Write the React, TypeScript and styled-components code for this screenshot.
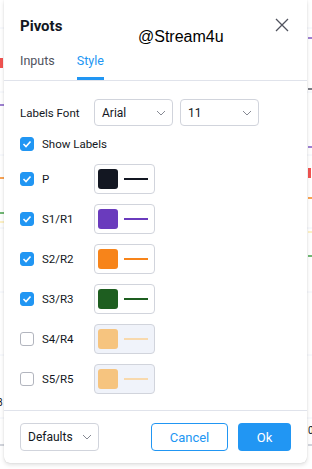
import styled, { createGlobalStyle } from "styled-components";

const GlobalStyle = createGlobalStyle`
  html, body {
    margin: 0;
    padding: 0;
    background: #ffffff;
  }
  body {
    font-family: Roboto, "Noto Sans", sans-serif;
    color: #131722;
  }
`;

const BLUE = "#2196f3";

type PivotRow = {
  label: string;
  checked: boolean;
  swatch: string;
  line: string;
};

const rows: PivotRow[] = [
  { label: "P", checked: true, swatch: "#131722", line: "#131722" },
  { label: "S1/R1", checked: true, swatch: "#6a3bbd", line: "#6a3bbd" },
  { label: "S2/R2", checked: true, swatch: "#f7841a", line: "#f7841a" },
  { label: "S3/R3", checked: true, swatch: "#1e5e20", line: "#1e5e20" },
  { label: "S4/R4", checked: false, swatch: "#f6c47f", line: "#f8d9ad" },
  { label: "S5/R5", checked: false, swatch: "#f6c47f", line: "#f8d9ad" },
];

function ChartBackdrop() {
  // bits of the chart that peek out around the dialog
  return (
    <Backdrop width="312" height="469" viewBox="0 0 312 469">
      {[28, 92, 155, 228, 292, 355, 418].map((y) => (
        <line key={y} x1="0" x2="312" y1={y} y2={y} stroke="#f0f3fa" strokeWidth="1" />
      ))}
      <rect x="0" y="58" width="3" height="10" fill="#f05350" />
      <line x1="0" x2="4" y1="105" y2="105" stroke="#7e57c2" strokeWidth="1.5" />
      <line x1="0" x2="4" y1="178" y2="178" stroke="#f7841a" strokeWidth="1.5" />
      <line x1="0" x2="4" y1="213" y2="213" stroke="#43a047" strokeWidth="1.5" />
      <line x1="0" x2="4" y1="222" y2="222" stroke="#fbe38a" strokeWidth="1" />
      <line x1="0" x2="4" y1="445" y2="445" stroke="#d1d4dc" strokeWidth="2" />
      <text x="-3" y="406" fontSize="10" fill="#131722" fontFamily="Roboto">8</text>
      <line x1="308" x2="312" y1="38" y2="38" stroke="#7e57c2" strokeWidth="1.5" />
      <line x1="308" x2="312" y1="89" y2="89" stroke="#50535e" strokeWidth="1.5" />
      <line x1="308" x2="312" y1="147" y2="147" stroke="#7e57c2" strokeWidth="1.5" />
      <rect x="308" y="168" width="3" height="10" fill="#f05350" />
      <line x1="308" x2="312" y1="198" y2="198" stroke="#f7841a" strokeWidth="1.5" />
      <line x1="308" x2="312" y1="232" y2="232" stroke="#fbe38a" strokeWidth="1" />
      <line x1="308" x2="312" y1="256" y2="256" stroke="#43a047" strokeWidth="1.5" />
      <line x1="308" x2="312" y1="445" y2="445" stroke="#d1d4dc" strokeWidth="2" />
      <text x="308" y="434" fontSize="10" fill="#131722" fontFamily="Roboto">0</text>
    </Backdrop>
  );
}

function Chevron() {
  return (
    <svg width="10" height="6" viewBox="0 0 10 6">
      <path d="M1 1l4 4 4-4" fill="none" stroke="#868993" strokeWidth="1" />
    </svg>
  );
}

function Check() {
  return (
    <svg width="10" height="8" viewBox="0 0 10 8">
      <path d="M1.5 4l2.5 2.5 4.5-5" fill="none" stroke="#fff" strokeWidth="1.6" />
    </svg>
  );
}

function App() {
  return (
    <Page>
      <GlobalStyle />
      <ChartBackdrop />
      <Dialog>
        <Header>
          <Title>Pivots</Title>
          <CloseButton aria-label="close">
            <svg width="14" height="14" viewBox="0 0 14 14">
              <path d="M1 1l12 12M13 1L1 13" stroke="#50535e" strokeWidth="1.3" />
            </svg>
          </CloseButton>
          <Watermark>@Stream4u</Watermark>
        </Header>

        <Tabs>
          <Tab>Inputs</Tab>
          <Tab $active>Style</Tab>
        </Tabs>

        <Content>
          <FontRow>
            <FieldLabel>Labels Font</FieldLabel>
            <Select $width={79}>
              Arial
              <Chevron />
            </Select>
            <Select $width={79}>
              11
              <Chevron />
            </Select>
          </FontRow>

          <CheckRow>
            <Box $checked>
              <Check />
            </Box>
            <CheckText>Show Labels</CheckText>
          </CheckRow>

          <ColorList>
            {rows.map((r) => (
              <ColorRow key={r.label}>
                <CheckRow>
                  <Box $checked={r.checked}>{r.checked && <Check />}</Box>
                  <CheckText>{r.label}</CheckText>
                </CheckRow>
                <ColorButton $disabled={!r.checked}>
                  <Swatch $color={r.swatch} />
                  <LineSample $color={r.line} />
                </ColorButton>
              </ColorRow>
            ))}
          </ColorList>
        </Content>

        <Footer>
          <Select as="button" $width={79} $height={28}>
            Defaults
            <Chevron />
          </Select>
          <Spacer />
          <OutlineButton>Cancel</OutlineButton>
          <PrimaryButton>Ok</PrimaryButton>
        </Footer>
      </Dialog>
    </Page>
  );
}

const Page = styled.div`
  position: relative;
  width: 312px;
  height: 469px;
  overflow: hidden;
  background: #ffffff;
`;

const Backdrop = styled.svg`
  position: absolute;
  inset: 0;
`;

const Dialog = styled.div`
  position: absolute;
  left: 4px;
  top: 0;
  width: 303px;
  height: 463px;
  background: #ffffff;
  border-radius: 0 0 6px 6px;
  box-shadow: 0 2px 4px rgba(0, 0, 0, 0.12), 0 0 1px rgba(0, 0, 0, 0.2);
  display: flex;
  flex-direction: column;
`;

const Header = styled.div`
  position: relative;
  height: 46px;
  display: flex;
  align-items: center;
  justify-content: space-between;
  padding: 0 16px;
  box-sizing: border-box;
`;

const Title = styled.div`
  font-size: 15px;
  font-weight: 700;
  margin-top: 5px;
`;

const CloseButton = styled.button`
  border: 0;
  background: none;
  padding: 0;
  margin-right: 2px;
  margin-top: 4px;
  display: flex;
  cursor: pointer;
`;

const Watermark = styled.div`
  position: absolute;
  left: 134px;
  top: 28px;
  font-family: "Liberation Sans", Arial, sans-serif;
  font-size: 16px;
  color: #000000;
  line-height: 18px;
`;

const Tabs = styled.div`
  height: 34px;
  display: flex;
  gap: 22px;
  padding: 0 16px;
  border-bottom: 1px solid #e0e3eb;
`;

const Tab = styled.div<{ $active?: boolean }>`
  font-size: 12.5px;
  line-height: 18px;
  padding-top: 6px;
  box-sizing: border-box;
  height: 34px;
  color: ${({ $active }) => ($active ? BLUE : "#50535e")};
  border-bottom: 3px solid ${({ $active }) => ($active ? BLUE : "transparent")};
  margin-bottom: -1px;
`;

const Content = styled.div`
  flex: 1;
  padding: 18px 16px 0;
  display: flex;
  flex-direction: column;
`;

const FontRow = styled.div`
  display: flex;
  align-items: center;
  height: 27px;
  gap: 7px;
`;

const FieldLabel = styled.div`
  width: 67px;
  font-size: 11.5px;
  color: #131722;
`;

const Select = styled.div<{ $width: number; $height?: number }>`
  width: ${({ $width }) => $width}px;
  height: ${({ $height }) => $height ?? 27}px;
  box-sizing: border-box;
  border: 1px solid #d1d4dc;
  border-radius: 4px;
  background: #ffffff;
  display: flex;
  align-items: center;
  justify-content: space-between;
  padding: 0 6px 0 7px;
  font-family: inherit;
  font-size: 12px;
  color: #131722;
`;

const CheckRow = styled.div`
  display: flex;
  align-items: center;
  gap: 8px;
  height: 20px;
  margin-top: 8px;
`;

const Box = styled.div<{ $checked?: boolean }>`
  width: 14px;
  height: 14px;
  box-sizing: border-box;
  border-radius: 3px;
  display: flex;
  align-items: center;
  justify-content: center;
  background: ${({ $checked }) => ($checked ? BLUE : "#ffffff")};
  border: 1px solid ${({ $checked }) => ($checked ? BLUE : "#b2b5be")};
`;

const CheckText = styled.div`
  font-size: 11.5px;
  color: #131722;
`;

const ColorList = styled.div`
  display: flex;
  flex-direction: column;
  gap: 10px;
  margin-top: 10px;

  ${CheckRow} {
    margin-top: 0;
    width: 74px;
  }
`;

const ColorRow = styled.div`
  display: flex;
  align-items: center;
  height: 30px;
`;

const ColorButton = styled.div<{ $disabled?: boolean }>`
  width: 61px;
  height: 30px;
  box-sizing: border-box;
  border: 1px solid #d1d4dc;
  border-radius: 4px;
  background: ${({ $disabled }) => ($disabled ? "#f0f3fa" : "#ffffff")};
  display: flex;
  align-items: center;
  gap: 6px;
  padding-left: 3px;
`;

const Swatch = styled.div<{ $color: string }>`
  width: 20px;
  height: 20px;
  border-radius: 3px;
  background: ${({ $color }) => $color};
`;

const LineSample = styled.div<{ $color: string }>`
  width: 24px;
  height: 2px;
  background: ${({ $color }) => $color};
`;

const Footer = styled.div`
  border-top: 1px solid #e0e3eb;
  padding: 12px 16px 12px;
  display: flex;
  align-items: center;
  gap: 10px;
`;

const Spacer = styled.div`
  flex: 1;
`;

const OutlineButton = styled.button`
  width: 77px;
  height: 28px;
  box-sizing: border-box;
  border: 1px solid ${BLUE};
  border-radius: 4px;
  background: #ffffff;
  color: ${BLUE};
  font-family: inherit;
  font-size: 13px;
`;

const PrimaryButton = styled.button`
  width: 53px;
  height: 28px;
  border: 0;
  border-radius: 4px;
  background: ${BLUE};
  color: #ffffff;
  font-family: inherit;
  font-size: 13px;
`;

export default App;
